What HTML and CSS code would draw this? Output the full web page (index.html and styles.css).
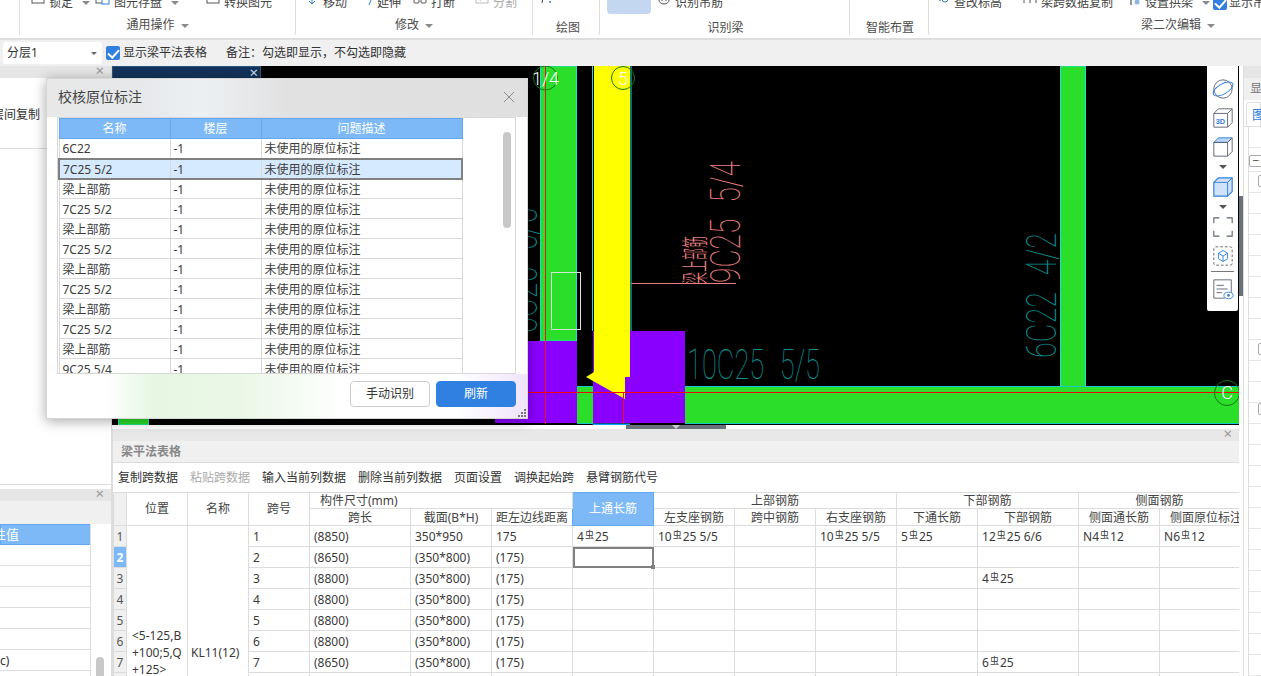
FILE: index.html
```html
<!DOCTYPE html>
<html lang="zh-CN">
<head>
<meta charset="utf-8">
<title>校核原位标注</title>
<link rel="stylesheet" href="styles.css">
</head>
<body>
<div class="app">
  <header class="ribbon">
    <section class="rgroup g-edge"></section>
    <section class="rgroup g-common">
      <div class="tools">
        <span class="tool t-lock"><svg class="ic" viewBox="0 0 14 14"><rect x="1" y="-4" width="12" height="11" fill="#fff" stroke="#555"/><rect x="5" y="0" width="4" height="4" fill="#2f80e0"/></svg>锁定<i class="caret"></i></span>
        <span class="tool t-save"><svg class="ic" viewBox="0 0 16 14"><rect x="1" y="-4" width="11" height="11" fill="#fff" stroke="#555"/><rect x="7" y="2" width="7" height="6" fill="#fff" stroke="#2f80e0"/></svg>图元存盘<i class="caret"></i></span>
        <span class="tool"><svg class="ic" viewBox="0 0 14 14"><rect x="1" y="-4" width="12" height="11" fill="#fff" stroke="#555"/><path d="M4 3h3M10 1v3" stroke="#2f80e0" fill="none"/></svg>转换图元</span>
      </div>
      <div class="glabel">通用操作<i class="caret"></i></div>
    </section>
    <section class="rgroup g-modify">
      <div class="tools">
        <span class="tool"><svg class="ic" viewBox="0 0 16 14"><path d="M8 -4v12M2 2h12M5 5l3 3 3-3M4 0l-2 2 2 2M12 0l2 2-2 2" stroke="#2f80e0" fill="none"/></svg>移动</span>
        <span class="tool"><svg class="ic" viewBox="0 0 16 14"><path d="M1 0h3M6 0h3M13 0v3M11 9l2-5" stroke="#2f80e0" fill="none"/><path d="M11 0h3" stroke="#555"/></svg>延伸</span>
        <span class="tool"><svg class="ic" viewBox="0 0 14 14"><rect x="1" y="1" width="5" height="6" rx="1" fill="none" stroke="#555"/><rect x="8" y="1" width="5" height="6" rx="1" fill="none" stroke="#555"/></svg>打断</span>
        <span class="tool t-off"><svg class="ic" viewBox="0 0 14 14"><rect x="1" y="-4" width="12" height="11" fill="#fff" stroke="#bbb"/><path d="M5 5l4-6" stroke="#bbb"/></svg>分割</span>
      </div>
      <div class="glabel">修改<i class="caret"></i></div>
    </section>
    <section class="rgroup g-draw">
      <div class="tools"><svg class="ic wide" viewBox="0 0 22 14"><path d="M4 -3L2 7" stroke="#444" fill="none"/><circle cx="10" cy="6" r="1" fill="#2f80e0"/><path d="M17 1h6l-3 3z" fill="#777"/></svg></div>
      <div class="glabel low">绘图</div>
    </section>
    <section class="rgroup g-recog">
      <div class="tools"><span class="bluebox"></span><span class="tool"><svg class="ic" viewBox="0 0 14 14"><path d="M2 0v4a5 4 0 0 0 10 0V0M5 1v4M9 1v4" stroke="#555" fill="none"/></svg>识别吊筋</span></div>
      <div class="glabel low">识别梁</div>
    </section>
    <section class="rgroup g-smart">
      <div class="tools center"><i class="caret"></i></div>
      <div class="glabel low">智能布置</div>
    </section>
    <section class="rgroup g-second">
      <div class="tools">
        <span class="tool"><svg class="ic" viewBox="0 0 14 14"><path d="M3 -3v7h2" stroke="#555" fill="none"/><circle cx="9" cy="3" r="3" fill="none" stroke="#2f80e0"/></svg>查改标高</span>
        <span class="tool"><svg class="ic" viewBox="0 0 14 14"><path d="M1 7V1h12v6M7 1v6" stroke="#555" fill="none"/></svg>梁跨数据复制</span>
        <span class="tool t-arch"><svg class="ic" viewBox="0 0 14 14"><path d="M4 1v1M4 4v5" stroke="#333" fill="none"/><circle cx="10" cy="6" r="2.5" fill="#8ab7e8"/></svg>设置拱梁<i class="caret"></i></span>
        <span class="tool t-check"><span class="check small"></span>显示吊筋</span>
      </div>
      <div class="glabel second">梁二次编辑<i class="caret"></i></div>
    </section>
  </header>

  <div class="optbar">
    <div class="select">分层1<i class="caret dark"></i></div>
    <span class="check"></span>
    <span class="optlabel">显示梁平法表格</span>
    <span class="note">备注：勾选即显示，不勾选即隐藏</span>
  </div>

  <main class="main">
    <aside class="left">
      <section class="lpanel upper">
        <div class="phead"><span class="x">×</span></div>
        <div class="copyrow"><span class="cuttext">层间复制</span></div>
      </section>
      <section class="lpanel lower">
        <div class="phead"><span class="x">×</span></div>
        <div class="subhead"></div>
        <div class="proplist">
          <div class="propcol">
            <div class="prophead">属性值</div>
            <div class="prop"></div>
            <div class="prop"></div>
            <div class="prop"></div>
            <div class="prop"></div>
            <div class="prop"></div>
            <div class="prop">c)</div>
            <div class="prop"></div>
          </div>
          <div class="propscroll"><span class="thumb"></span></div>
        </div>
      </section>
    </aside>

    <div class="center">
      <div class="canvas">
        <svg class="draw" viewBox="112 66 1127 359" width="1127" height="359">
          <rect x="540.5" y="66" width="36" height="275" fill="#2ade2a" stroke="#19e0e0"/>
          <rect x="1060.5" y="66" width="25" height="321" fill="#2ade2a" stroke="#19e0e0"/>
          <rect x="118.5" y="400" width="30" height="25" fill="#2ade2a" stroke="#19e0e0"/>
          <rect x="577" y="387" width="662" height="36" fill="#2ade2a"/>
          <path d="M577 386.5H593M685 386.5H1239M685 423.5H1239M577 423.5H593" stroke="#19c8c8"/>
          <rect x="495" y="341" width="82" height="82" fill="#8a00ff"/>
          <rect x="593" y="331" width="92" height="92" fill="#8a00ff"/>
          <path d="M592.5 66V331M631 66V331" stroke="#19e0e0"/>
          <path d="M594 66H630V377H625V399L586 377L594 372Z" fill="#ffff00"/>
          <rect x="593" y="423.5" width="37" height="1.5" fill="#10a0ff"/>
          <path d="M545.5 66V424M623.5 392V424" stroke="#e8141c"/>
          <path d="M495 392.5H1239" stroke="#f00808"/>
          <rect x="551.5" y="272.5" width="29" height="57" fill="none" stroke="#cfe8cf"/>
          <path d="M631 283.5H736" stroke="#e87f7f"/>
          <text class="cad pink" transform="translate(740 283) rotate(-90)" textLength="122" lengthAdjust="spacingAndGlyphs">9C25 5/4</text>
          <text class="cadcjk pink" transform="translate(705 284) rotate(-90)" textLength="48" lengthAdjust="spacingAndGlyphs">梁上部筋</text>
          <text class="cad teal" transform="translate(1056 358) rotate(-90)" textLength="125" lengthAdjust="spacingAndGlyphs">6C22 4/2</text>
          <text class="cad teal" transform="translate(537 333) rotate(-90)" textLength="125" lengthAdjust="spacingAndGlyphs">6C25 5/5</text>
          <text class="cad teal" x="687" y="379" textLength="133" lengthAdjust="spacingAndGlyphs">10C25 5/5</text>
          <circle cx="545.5" cy="78" r="12" fill="none" stroke="#0f7a0f"/>
          <circle cx="623" cy="78" r="11.500" fill="none" stroke="#0f7a0f"/>
          <circle cx="1227" cy="393" r="12.500" fill="none" stroke="#0f7a0f"/>
          <text class="axis" x="545.500" y="85" text-anchor="middle">1/4</text>
          <text class="axis" x="623" y="85" text-anchor="middle">5</text>
          <text class="axis" x="1227" y="399" text-anchor="middle">C</text>
        </svg>
        <div class="navtab"><span class="x light">×</span></div>
        <nav class="viewbar">
          <svg viewBox="0 0 24 24" class="vb"><ellipse cx="12" cy="12" rx="10" ry="10" fill="none" stroke="#5a6270"/><ellipse cx="12" cy="12" rx="12" ry="5.500" transform="rotate(-30 12 12)" fill="none" stroke="#2f80e0"/></svg>
          <svg viewBox="0 0 24 24" class="vb"><path d="M2 7h15v15H2zM2 7l5-5h15v15l-5 5M17 7l5-5" fill="#fff" stroke="#5a6270"/><text class="tiny" x="4" y="18">3D</text></svg>
          <svg viewBox="0 0 24 24" class="vb"><path d="M2 7l5-5h15l-5 5z" fill="#bcd6f5" stroke="#2f80e0"/><path d="M2 7h15v15H2zM17 7l5-5v15l-5 5" fill="none" stroke="#5a6270"/></svg>
          <i class="caret vcaret"></i>
          <svg viewBox="0 0 24 24" class="vb"><path d="M2 7l5-5h15v15l-5 5H2z" fill="#cfe2fa" stroke="#2f80e0" stroke-width="1.300"/><path d="M2 7h15v15M17 7l5-5" fill="none" stroke="#2f80e0"/></svg>
          <i class="caret vcaret"></i>
          <svg viewBox="0 0 24 24" class="vb"><path d="M2 8V2H8M16 2h6v6M22 16v6h-6M8 22H2v-6" fill="none" stroke="#5a6270" stroke-width="1.200"/></svg>
          <svg viewBox="0 0 24 24" class="vb"><rect x="2" y="2" width="20" height="20" rx="2" fill="none" stroke="#5a6270" stroke-dasharray="3 2"/><path d="M12 6l5 3v6l-5 3-5-3V9zM7 9l5 3 5-3M12 12v6" fill="none" stroke="#2f80e0"/></svg>
          <hr class="vsep">
          <svg viewBox="0 0 24 24" class="vb"><path d="M2 2h19v15M2 2v20h12" fill="none" stroke="#5a6270"/><path d="M5 8h8M5 12h12M5 16h6" stroke="#5a6270"/><ellipse cx="18" cy="19" rx="5" ry="3.500" fill="#fff" stroke="#2f80e0"/><circle cx="18" cy="19" r="1.500" fill="#2f80e0"/></svg>
        </nav>
      </div>
      <div class="splitter"><span class="handle"><i class="caret white"></i></span></div>
      <section class="beam">
        <div class="beamhead"><span class="x">×</span></div>
        <div class="beamtitle">梁平法表格</div>
        <div class="beamtools">
          <span>复制跨数据</span><span class="off">粘贴跨数据</span><span>输入当前列数据</span><span>删除当前列数据</span><span>页面设置</span><span>调换起始跨</span><span>悬臂钢筋代号</span>
        </div>
        <div class="gridwrap">
          <table class="grid">
            <colgroup><col class="c13"><col class="c61"><col class="c61"><col class="c61"><col class="c101"><col class="c81"><col class="c81"><col class="c81"><col class="c81"><col class="c81"><col class="c81"><col class="c81"><col class="c101"><col class="c81"><col class="c81"></colgroup>
            <thead>
              <tr class="h1">
                <th class="rh" rowspan="2"></th><th rowspan="2">位置</th><th rowspan="2">名称</th><th rowspan="2">跨号</th>
                <th colspan="3" class="hleft">构件尺寸(mm)</th><th rowspan="2" class="hblue">上通长筋</th>
                <th colspan="3">上部钢筋</th><th colspan="2">下部钢筋</th><th colspan="2">侧面钢筋</th>
              </tr>
              <tr class="h2">
                <th>跨长</th><th>截面(B*H)</th><th class="tight">距左边线距离</th><th>左支座钢筋</th><th>跨中钢筋</th><th>右支座钢筋</th><th>下通长筋</th><th>下部钢筋</th><th>侧面通长筋</th><th class="clip">侧面原位标注</th>
              </tr>
            </thead>
            <tbody>
              <tr><td class="rh">1</td><td rowspan="12" class="pos">&lt;5-125,B<br>+100;5,Q<br>+125&gt;</td><td rowspan="12" class="name">KL11(12)</td><td>1</td><td>(8850)</td><td>350*950</td><td>175</td><td>4<span class="rb">虫</span>25</td><td>10<span class="rb">虫</span>25 5/5</td><td></td><td>10<span class="rb">虫</span>25 5/5</td><td>5<span class="rb">虫</span>25</td><td>12<span class="rb">虫</span>25 6/6</td><td>N4<span class="rb">虫</span>12</td><td>N6<span class="rb">虫</span>12</td></tr>
              <tr><td class="rh on">2</td><td>2</td><td>(8650)</td><td>(350*800)</td><td>(175)</td><td class="cursor"><span class="grip"></span></td><td></td><td></td><td></td><td></td><td></td><td></td><td></td></tr>
              <tr><td class="rh">3</td><td>3</td><td>(8800)</td><td>(350*800)</td><td>(175)</td><td></td><td></td><td></td><td></td><td></td><td>4<span class="rb">虫</span>25</td><td></td><td></td></tr>
              <tr><td class="rh">4</td><td>4</td><td>(8800)</td><td>(350*800)</td><td>(175)</td><td></td><td></td><td></td><td></td><td></td><td></td><td></td><td></td></tr>
              <tr><td class="rh">5</td><td>5</td><td>(8800)</td><td>(350*800)</td><td>(175)</td><td></td><td></td><td></td><td></td><td></td><td></td><td></td><td></td></tr>
              <tr><td class="rh">6</td><td>6</td><td>(8800)</td><td>(350*800)</td><td>(175)</td><td></td><td></td><td></td><td></td><td></td><td></td><td></td><td></td></tr>
              <tr><td class="rh">7</td><td>7</td><td>(8650)</td><td>(350*800)</td><td>(175)</td><td></td><td></td><td></td><td></td><td></td><td>6<span class="rb">虫</span>25</td><td></td><td></td></tr>
              <tr><td class="rh">8</td><td>8</td><td></td><td></td><td></td><td></td><td></td><td></td><td></td><td></td><td></td><td></td><td></td></tr>
              <tr><td class="rh">9</td><td>9</td><td></td><td></td><td></td><td></td><td></td><td></td><td></td><td></td><td></td><td></td><td></td></tr>
              <tr><td class="rh">10</td><td>10</td><td></td><td></td><td></td><td></td><td></td><td></td><td></td><td></td><td></td><td></td><td></td></tr>
              <tr><td class="rh">11</td><td>11</td><td></td><td></td><td></td><td></td><td></td><td></td><td></td><td></td><td></td><td></td><td></td></tr>
              <tr><td class="rh">12</td><td>12</td><td></td><td></td><td></td><td></td><td></td><td></td><td></td><td></td><td></td><td></td><td></td></tr>
            </tbody>
          </table>
        </div>
      </section>
    </div>

    <div class="rstrip"><span class="rstripthumb"></span></div>

    <aside class="right">
      <div class="phead"></div>
      <div class="rsub">显</div>
      <div class="rtabs"><span class="rtab">图</span></div>
      <div class="rtree">
        <span class="box minus">−</span>
        <span class="box b2"></span>
        <span class="box b3"></span>
        <span class="box b4"></span>
      </div>
    </aside>
  </main>

  <div class="dialog">
    <div class="dtitle"><span>校核原位标注</span><svg class="dclose" viewBox="0 0 12 12"><path d="M1 1l10 10M11 1L1 11" stroke="#8a8a8a" fill="none"/></svg></div>
    <div class="dframe">
      <table class="dtable">
        <colgroup><col class="d1"><col class="d2"><col class="d3"></colgroup>
        <thead><tr><th>名称</th><th>楼层</th><th>问题描述</th></tr></thead>
        <tbody>
          <tr><td>6C22</td><td>-1</td><td>未使用的原位标注</td></tr>
          <tr class="sel"><td>7C25 5/2</td><td>-1</td><td>未使用的原位标注</td></tr>
          <tr><td>梁上部筋</td><td>-1</td><td>未使用的原位标注</td></tr>
          <tr><td>7C25 5/2</td><td>-1</td><td>未使用的原位标注</td></tr>
          <tr><td>梁上部筋</td><td>-1</td><td>未使用的原位标注</td></tr>
          <tr><td>7C25 5/2</td><td>-1</td><td>未使用的原位标注</td></tr>
          <tr><td>梁上部筋</td><td>-1</td><td>未使用的原位标注</td></tr>
          <tr><td>7C25 5/2</td><td>-1</td><td>未使用的原位标注</td></tr>
          <tr><td>梁上部筋</td><td>-1</td><td>未使用的原位标注</td></tr>
          <tr><td>7C25 5/2</td><td>-1</td><td>未使用的原位标注</td></tr>
          <tr><td>梁上部筋</td><td>-1</td><td>未使用的原位标注</td></tr>
          <tr><td>9C25 5/4</td><td>-1</td><td>未使用的原位标注</td></tr>
        </tbody>
      </table>
      <span class="dscroll"></span>
    </div>
    <div class="dfoot">
      <button class="btn">手动识别</button>
      <button class="btn primary">刷新</button>
      <svg class="dgrip" viewBox="0 0 9 9"><path d="M7 1h2v2H7zM4 4h2v2H4zM7 4h2v2H7zM1 7h2v2H1zM4 7h2v2H4zM7 7h2v2H7z" fill="#777"/></svg>
    </div>
  </div>
</div>
</body>
</html>
```

FILE: styles.css
```css
* { box-sizing: border-box; }
html, body { margin: 0; height: 100%; overflow: hidden; background: #fff; }
body { font: 12px/1.2 "Noto Sans", "Noto Sans CJK SC", sans-serif; color: #333; }
.app { position: relative; width: 1261px; height: 676px; display: flex; flex-direction: column; overflow: hidden; }

/* ribbon */
.ribbon { height: 40px; flex: none; display: flex; background: #fff; border-bottom: 2px solid #dedede; overflow: hidden; }
.rgroup { height: 35px; border-right: 1px solid #ddd; flex: none; position: relative; color: #444; }
.g-edge { width: 20px; }
.g-common { width: 276px; }
.g-modify { width: 237px; }
.g-draw { width: 67px; }
.g-recog { width: 250px; }
.g-smart { width: 79px; }
.g-second { width: 333px; border-right: 0; }
.tools { height: 14px; margin-top: -4px; display: flex; align-items: center; white-space: nowrap; }
.tools.center { justify-content: center; }
.g-common .tools { padding-left: 10px; }
.g-modify .tools { padding-left: 8px; gap: 11px; }
.g-modify .t-off { margin-left: 8px; }
.g-draw .tools { padding-left: 7px; }
.g-recog .tools { padding-left: 7px; }
.g-second .tools { padding-left: 6px; gap: 20px; }
.g-second .t-arch { margin-left: -7px; }
.g-second .t-check { margin-left: -21px; }
.tool { display: inline-flex; align-items: center; gap: 3px; flex: none; }
.t-lock { width: 65px; }
.t-save { width: 110px; }
.t-off { color: #aaa; }
.t-check { gap: 2px; }
.ic { width: 16px; height: 14px; flex: none; overflow: visible; }
.ic.wide { width: 22px; }
.caret { display: inline-block; width: 0; height: 0; border: 4px solid transparent; border-top: 4px solid #8a8a8a; border-bottom: 0; margin-left: 6px; vertical-align: 2px; flex: none; }
.caret.dark { border-top-color: #666; border-width: 3px 3px 0; }
.caret.white { border-top-color: #ccc; margin: 0; }
.bluebox { display: block; width: 44px; height: 18px; margin-top: 4px; border-radius: 0 0 4px 4px; background: #c3d8f0; margin-right: 5px; flex: none; }
.glabel { text-align: center; line-height: 16px; margin-top: 7px; white-space: nowrap; color: #4d4d4d; }
.glabel.low { margin-top: 10px; }
.glabel .caret { vertical-align: 1px; }
.g-draw .glabel { padding-left: 4px; }
.g-recog .glabel { padding-left: 2px; }
.g-smart .glabel { padding-left: 2px; }
.g-second .glabel { padding-left: 212px; text-align: left; }
.g-smart .tools { margin-top: 4px; height: 6px; margin-bottom: 4px; }

/* option bar */
.optbar { height: 26px; flex: none; display: flex; align-items: center; background: #f0f0f0; padding-left: 3px; color: #333; }
.select { width: 99px; height: 22px; background: #fff; border-radius: 3px; line-height: 22px; padding: 0 5px 0 4px; display: flex; align-items: center; justify-content: space-between; }
.check { width: 14px; height: 14px; border-radius: 2px; background: #2f80e0; margin-left: 4px; position: relative; flex: none; display: inline-block; }
.check::after { content: ""; position: absolute; left: 4px; top: 1px; width: 5px; height: 9px; border: solid #fff; border-width: 0 2px 2px 0; transform: rotate(42deg); }
.optlabel { margin-left: 3px; }
.note { margin-left: 19px; }

/* main */
.main { flex: 1; min-height: 0; display: flex; }
.left { width: 112px; flex: none; display: flex; flex-direction: column; border-right: 1px solid #ddd; }
.lpanel { display: flex; flex-direction: column; }
.upper { height: 419px; border-bottom: 1px solid #ddd; }
.lower { margin-top: 4px; flex: 1; min-height: 0; }
.phead { height: 12px; background: #e6e6e6; position: relative; flex: none; }
.x { position: absolute; right: 7px; top: -3px; font-size: 15px; line-height: 15px; color: #999; }
.x.light { color: #cfe0f4; right: 2px; top: -2px; }
.copyrow { height: 71px; border-bottom: 1px solid #ddd; overflow: hidden; padding-top: 30px; }
.cuttext { display: block; margin-left: -8px; white-space: nowrap; }
.subhead { height: 23px; background: #f0f0f0; }
.proplist { flex: 1; display: flex; min-height: 0; overflow: hidden; }
.propcol { width: 91px; border-right: 1px solid #ddd; overflow: hidden; flex: none; }
.prophead { height: 21px; background: #7db9f7; border: 1px solid #62a7ef; border-right: 0; color: #fff; white-space: nowrap; direction: rtl; line-height: 19px; padding-right: 71px; font-size: 13px; text-align: right; }
.prop { height: 21px; border-bottom: 1px solid #ddd; line-height: 21px; overflow: hidden; }
.propscroll { flex: 1; position: relative; }
.thumb { position: absolute; left: 5px; top: 133px; width: 8px; height: 30px; border-radius: 4px; background: #c8c8c8; }

/* centre */
.center { width: 1127px; flex: none; display: flex; flex-direction: column; min-height: 0; }
.canvas { height: 359px; flex: none; background: #000; position: relative; overflow: hidden; }
.draw { display: block; }
.cad { font-family: "Roboto", "Liberation Sans", sans-serif; font-weight: 100; font-size: 42px; word-spacing: 14px; }
.cadcjk { font-family: "Noto Sans CJK SC", sans-serif; font-weight: 300; font-size: 27px; }
.pink { fill: #ee8080; }
.teal { fill: #089090; }
.axis { font-family: "Roboto", "Liberation Sans", sans-serif; font-weight: 300; font-size: 18px; fill: #fff; }
.tiny { font: bold 8px "Liberation Sans", sans-serif; fill: #2f80e0; }
.navtab { position: absolute; left: 0; top: 0; width: 149px; height: 14px; background: #14335a; border: 1px solid #2a5580; }
.viewbar { position: absolute; right: 1px; top: 0; width: 31px; height: 245px; background: #fff; border-radius: 0 0 2px 2px; display: flex; flex-direction: column; align-items: center; padding-top: 12px; gap: 7px; }
.vb { width: 22px; height: 22px; flex: none; overflow: visible; }
.vcaret { margin: 0; border-width: 4px 4px 0; border-top-color: #555; }
.vsep { width: 23px; height: 1px; border: 0; background: #777; margin: -3px 0 -1px; flex: none; }
.splitter { height: 4px; flex: none; background: #fff; padding-left: 514px; }
.handle { display: flex; justify-content: center; width: 100px; height: 4px; background: #69717a; }
.beam { flex: 1; min-height: 0; display: flex; flex-direction: column; border-left: 1px solid #ddd; overflow: hidden; }
.beamhead { height: 12px; background: #e8e8e8; position: relative; flex: none; }
.beamtitle { height: 22px; flex: none; background: #f0f0f0; border-bottom: 1px solid #ddd; line-height: 21px; padding-left: 8px; font-weight: 700; color: #888; }
.beamtools { height: 29px; flex: none; display: flex; gap: 12px; align-items: center; padding-left: 5px; padding-top: 1px; white-space: nowrap; }
.off { color: #aaa; }
.gridwrap { flex: 1; min-height: 0; overflow: hidden; width: 1126px; }
.grid { table-layout: fixed; border-collapse: collapse; width: 1127px; }
.c13 { width: 13px; }
.c61 { width: 61px; }
.c81 { width: 81px; }
.c101 { width: 101px; }
.grid th, .grid td { border: 1px solid #dcdcdc; padding: 0; overflow: hidden; white-space: nowrap; font-weight: 400; }
.grid th { text-align: center; color: #444; background: #fff; }
.grid .h1 th { height: 16px; line-height: 14px; }
.grid .h2 th { height: 17px; line-height: 15px; }
.grid .hleft { text-align: left; padding-left: 10px; }
.grid .hblue { background: #7db9f7; color: #fff; border-color: #62a7ef; }
.grid thead .rh { background: #f0f0f0; }
.grid thead .clip { text-align: left; padding-left: 10px; }
.grid td { height: 21px; line-height: 19px; padding-left: 4px; color: #3a3a3a; }
.grid td.rh { background: #f0f0f0; text-align: center; padding: 0; color: #555; }
.grid td.rh.on { background: #7db9f7; color: #fff; font-weight: 700; }
.grid td.pos { white-space: normal; line-height: 17px; padding: 2px 0 0 5px; }
.grid td.name { padding: 2px 0 0 3px; }
.rb { font-size: 9px; line-height: 0; vertical-align: 3px; margin: 0 1px; }
.grid td.cursor { position: relative; overflow: visible; outline: 2px solid #808080; outline-offset: -2px; }
.grip { position: absolute; right: -2px; bottom: -2px; width: 4px; height: 4px; background: #808080; }

/* right */
.rstrip { width: 4px; flex: none; padding-top: 130px; }
.rstripthumb { display: block; width: 4px; height: 100px; background: #69717a; }
.right { flex: 1; min-width: 0; border-left: 1px solid #ddd; display: flex; flex-direction: column; overflow: hidden; }
.rsub { height: 22px; background: #f0f0f0; line-height: 22px; padding-left: 6px; color: #777; flex: none; }
.rtabs { height: 27px; border-bottom: 1px solid #ddd; flex: none; padding: 2px 0 0 2px; }
.rtab { display: block; height: 25px; border: 1px solid #ddd; border-bottom: 0; border-radius: 4px 0 0 0; color: #2f80e0; padding: 4px 0 0 5px; font-size: 13px; }
.rtree { flex: 1; position: relative; border-left: 1px solid #ddd; margin-left: 4px; background: repeating-linear-gradient(to bottom, transparent 0 20px, #e6e6e6 20px 21px) 0 24px, #fff; }
.box { position: absolute; display: block; border: 1px solid #aaa; border-radius: 2px; width: 14px; height: 12px; background: #fff; line-height: 10px; text-align: center; color: #555; }
.minus { left: 0; top: 28px; }
.b2 { left: 9px; top: 48px; }
.b3 { left: 9px; top: 216px; }
.b4 { left: 9px; top: 276px; }

/* dialog */
.dialog { position: absolute; left: 46px; top: 78px; width: 482px; height: 341px; background: #fff; box-shadow: 0 2px 12px rgba(0,0,0,.35); border: 1px solid #d6d6d6; display: flex; flex-direction: column; }
.dtitle { height: 38px; flex: none; display: flex; align-items: center; justify-content: space-between; padding: 0 12px 2px 11px; font-size: 14px; color: #444; background: linear-gradient(to right, #e8e8e8 0, #e6e8ea 20%, #edf0f3 32%, #e1e1e1 50%, #e0e0e0 100%); }
.dclose { width: 12px; height: 12px; }
.dframe { height: 257px; margin: 0 11px 0 10px; border: 1px solid #d8d8d8; background: #fff; overflow: hidden; position: relative; flex: none; }
.dtable { table-layout: fixed; border-collapse: collapse; width: 403px; }
.d1 { width: 111px; }
.d2 { width: 91px; }
.d3 { width: 201px; }
.dtable th { height: 20px; background: #7db9f7; color: #fff; font-weight: 400; border: 1px solid #62a7ef; padding: 0; line-height: 18px; }
.dtable td { height: 20px; border: 1px solid #d8d8d8; padding: 1px 0 0 3px; line-height: 17px; white-space: nowrap; color: #3c3c3c; }
.dtable .sel td { background: #d5e9ff; border-top: 2px solid #808080; border-bottom: 2px solid #808080; }
.dtable .sel td:first-child { border-left: 2px solid #808080; }
.dtable .sel td:last-child { border-right: 2px solid #808080; }
.dscroll { position: absolute; left: 445px; top: 14px; width: 8px; height: 96px; border-radius: 4px; background: #c8c8c8; }
.dfoot { flex: 1; display: flex; justify-content: flex-end; align-items: flex-start; gap: 6px; padding: 7px 11px 0 0; position: relative; background: linear-gradient(to right, #fff 0, #fff 12%, #e7f6e3 22%, #eaf7e6 40%, #fff 62%, #fff 85%, #f0e4fb 100%); }
.btn { width: 80px; height: 26px; border: 1px solid #ccc; border-radius: 4px; background: #fff; color: #333; font: inherit; padding: 0; }
.btn.primary { background: #2f80e0; border-color: #2f80e0; color: #fff; }
.dgrip { position: absolute; right: 1px; bottom: 1px; width: 9px; height: 9px; }
```
